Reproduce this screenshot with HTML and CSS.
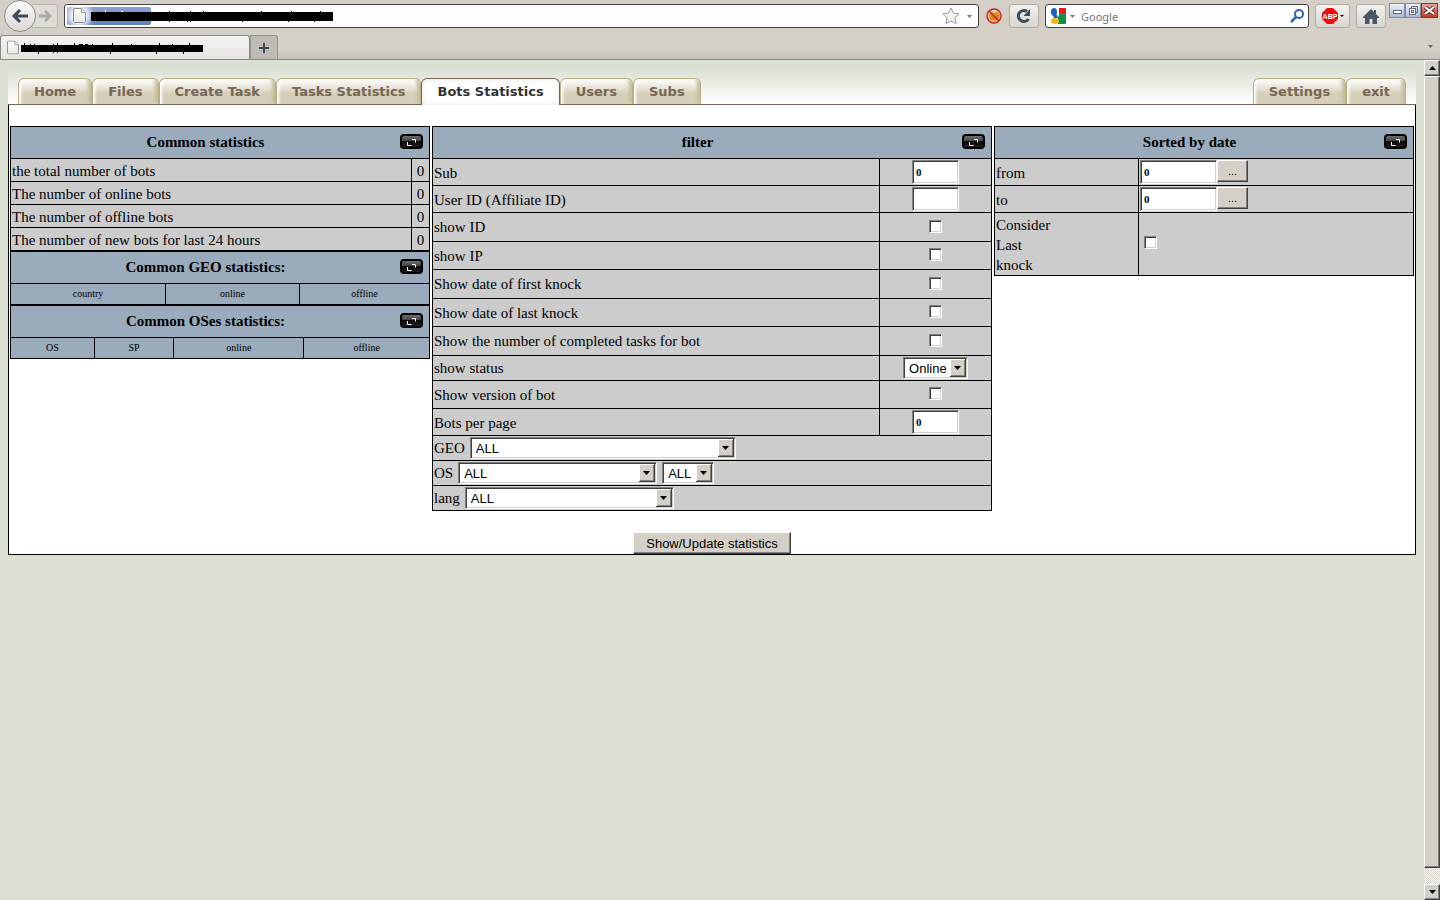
FILE: index.html
```html
<!DOCTYPE html>
<html lang="en">
  <head>
    <meta charset="utf-8">
    <title>Bots Statistics</title>
    <link rel="stylesheet" href="styles.css">
  </head>
  <body>
    <svg width="0" height="0" class="defs" aria-hidden="true">
      <defs>
        <linearGradient id="gloss" x1="0" y1="0" x2="0" y2="1">
          <stop offset="0" stop-color="#777" />
          <stop offset="0.45" stop-color="#444" />
          <stop offset="0.5" stop-color="#0a0a0a" />
          <stop offset="1" stop-color="#222" />
        </linearGradient>
        <linearGradient id="paper" x1="0" y1="0" x2="0" y2="1">
          <stop offset="0" stop-color="#fff" />
          <stop offset="1" stop-color="#e6e6e6" />
        </linearGradient>
        <symbol id="page-icon" viewBox="0 0 13 15">
          <path d="M1 .5h7.500l4 4v9l-1 1H1.500l-1-1V1z" fill="url(#paper)" stroke="#8a8a8a" />
          <path d="M8.500 .5v4h4" fill="#eee" stroke="#999" />
        </symbol>
        <symbol id="toggle-icon" viewBox="0 0 23 15">
          <rect x="1" y="1" width="21" height="13" rx="3" fill="url(#gloss)" stroke="#000" stroke-width="2" />
          <path d="M12 5.500h3.500v3M7.500 8v3.500h4" fill="none" stroke="#fff" />
        </symbol>
      </defs>
    </svg>

    <div class="browser">
      <div class="toolbar">
        <div class="history">
          <button class="back" aria-label="Back">
            <svg width="18" height="18" viewBox="0 0 18 18"><path d="M17 9H4M9 3L3 9l6 6" fill="none" stroke="#3f4b57" stroke-width="3" /></svg>
          </button>
          <button class="forward" aria-label="Forward">
            <svg width="14" height="14" viewBox="0 0 14 14"><path d="M1 7h10M7 2l5 5-5 5" fill="none" stroke="#a9a9a9" stroke-width="3" /></svg>
          </button>
        </div>
        <div class="address">
          <span class="identity"><svg width="13" height="15"><use href="#page-icon" /></svg></span>
          <svg class="address-mask" width="243" height="14" viewBox="0 0 243 14">
            <path d="M0 3h242v9H0z" />
            <path d="M78 2h1v11h-1zM96 3h1v10h-1zM99 2h1v11h-1zM112 2h1v3h-1zM151 4h1v9h-1zM170 2h1v3h-1zM197 4h1v9h-1zM200 2h1v3h-1zM223 4h1v9h-1zM229 2h1v3h-1z" />
            <path d="M14 1h1v2h-1zM30 2h2v1h-2z" fill="#fff" />
          </svg>
          <button class="star" aria-label="Bookmark">
            <svg width="18" height="18" viewBox="0 0 18 18"><path d="M9 1l2.500 5 5.500.8-4 4 1 5.700-5-2.500-5 2.500 1-5.700-4-4L6.500 6z" fill="#f1f1f1" stroke="#999" stroke-linejoin="round" /></svg>
          </button>
          <svg class="caret" width="5" height="3"><path d="M0 0h5L2.500 3z" fill="#777" /></svg>
        </div>
        <button class="plain" aria-label="Blocked add-on">
          <svg width="16" height="16" viewBox="0 0 16 16">
            <path d="M3 6l3-2 2 1 4-1 2 3-1 4-4 2-5-1z" fill="#e98a1c" />
            <path d="M5 8l2 1 3-2 2 2-2 2-4-1z" fill="#c87414" />
            <circle cx="8" cy="8" r="7" fill="none" stroke="#c8291d" stroke-width="1.500" />
            <path d="M3 3l10 10" stroke="#c8291d" stroke-width="1.500" />
          </svg>
        </button>
        <button class="tool" aria-label="Reload">
          <svg width="16" height="16" viewBox="0 0 16 16"><path d="M12.500 11A5.500 5.500 0 1 1 11 3.500" fill="none" stroke="#3f4b57" stroke-width="3" /><path d="M14 1v7H7.500z" fill="#3f4b57" /></svg>
        </button>
        <div class="search">
          <svg width="16" height="16" viewBox="0 0 16 16">
            <path d="M8 0h7a1 1 0 0 1 1 1v4H9z" fill="#e8161a" />
            <path d="M9 5h7v10a1 1 0 0 1-1 1H8V9z" fill="#109348" />
            <path d="M7 0h2v6L8 9v7H6z" fill="#fff" />
            <ellipse cx="4" cy="4" rx="3" ry="4" fill="#1b5fc4" />
            <path d="M3 7h4l1 3H4z" fill="#1b5fc4" />
            <ellipse cx="5" cy="13" rx="4" ry="3" fill="#f2b912" />
          </svg>
          <svg class="caret" width="5" height="3"><path d="M0 0h5L2.500 3z" fill="#777" /></svg>
          <input type="text" placeholder="Google" aria-label="Search">
          <svg width="14" height="14" viewBox="0 0 14 14"><circle cx="9" cy="5" r="4" fill="#fff" stroke="#2b63ad" stroke-width="2" /><path d="M6 8l-5 5" stroke="#2b63ad" stroke-width="2.500" /></svg>
        </div>
        <button class="tool wide" aria-label="Adblock">
          <svg width="22" height="16" viewBox="0 0 22 16">
            <path d="M5 0h6l5 5v6l-5 5H5l-5-5V5z" fill="#f00b0b" />
            <text x="8" y="11" text-anchor="middle" class="abp">ABP</text>
            <path d="M18 7h4l-2 2z" />
          </svg>
        </button>
        <button class="tool" aria-label="Home page">
          <svg width="16" height="15" viewBox="0 0 16 15"><path d="M8 0l3 3V1h2v4l3 3v1h-2v6H9.500v-5h-3v5H2V9H0V8z" fill="#4a5661" /></svg>
        </button>
        <div class="window-buttons">
          <button aria-label="Minimize"><svg width="9" height="9"><rect x=".5" y="4.500" width="8" height="3" fill="#fff" stroke="#667" /></svg></button>
          <button aria-label="Restore"><svg width="9" height="9"><path d="M2.500 2.500v-2h6v6h-2" fill="none" stroke="#667" /><rect x=".5" y="2.500" width="6" height="6" fill="#fff" stroke="#667" /><rect x="2.500" y="4.500" width="2" height="2" fill="none" stroke="#667" /></svg></button>
          <button class="close" aria-label="Close"><svg width="11" height="9"><path d="M1 1l9 7M10 1L1 8" stroke="#633" stroke-width="4" /><path d="M1 1l9 7M10 1L1 8" stroke="#fff" stroke-width="2" /></svg></button>
        </div>
      </div>

      <div class="tab-strip">
        <div class="browser-tab">
          <svg width="12" height="15" viewBox="0 0 13 15"><use href="#page-icon" /></svg>
          <svg width="182" height="12" viewBox="0 0 182 12">
            <path d="M0 3h182v7H0z" />
            <path d="M3 1h1v3H3zM9 2h1v2H9zM13 2h1v2h-1zM17 3h1v9h-1zM32 2h1v9h-1zM36 1h1v10h-1zM53 1h1v3h-1zM58 2h4v1h-4zM64 2h3v1h-3zM71 2h1v2h-1zM89 3h1v9h-1zM91 1h1v3h-1zM110 2h1v2h-1zM135 3h1v9h-1zM138 1h1v3h-1zM151 2h1v2h-1zM162 3h1v9h-1zM168 1h1v3h-1z" />
          </svg>
        </div>
        <button class="new-tab" aria-label="New tab">
          <svg width="10" height="10"><path d="M5 0v10M0 5h10" stroke="#3f4b57" stroke-width="2" /></svg>
        </button>
        <svg class="caret tab-list" width="5" height="3"><path d="M0 0h5L2.500 3z" fill="#666" /></svg>
      </div>

      <div class="viewport">
        <div class="page">
          <nav class="menu">
            <a href="#home">Home</a>
            <a href="#files">Files</a>
            <a href="#create">Create Task</a>
            <a href="#tasks">Tasks Statistics</a>
            <a href="#bots" class="active">Bots Statistics</a>
            <a href="#users">Users</a>
            <a href="#subs">Subs</a>
            <a href="#settings" class="right">Settings</a>
            <a href="#exit">exit</a>
          </nav>

          <form class="content">
            <div class="columns">
              <div>
                <table class="common">
                  <thead>
                    <tr>
                      <th colspan="2"><div class="title"><span>Common statistics</span><button type="button" aria-label="Toggle"><svg width="23" height="15"><use href="#toggle-icon" /></svg></button></div></th>
                    </tr>
                  </thead>
                  <tbody>
                    <tr><td>the total number of bots</td><td class="count">0</td></tr>
                    <tr><td>The number of online bots</td><td class="count">0</td></tr>
                    <tr><td>The number of offline bots</td><td class="count">0</td></tr>
                    <tr><td>The number of new bots for last 24 hours</td><td class="count">0</td></tr>
                  </tbody>
                </table>
                <table class="geo">
                  <colgroup><col class="country"><col class="online"><col></colgroup>
                  <tr>
                    <th colspan="3"><div class="title"><span>Common GEO statistics:</span><button type="button" aria-label="Toggle"><svg width="23" height="15"><use href="#toggle-icon" /></svg></button></div></th>
                  </tr>
                  <tr class="heads"><th>country</th><th>online</th><th>offline</th></tr>
                </table>
                <table class="oses">
                  <colgroup><col class="os"><col class="sp"><col class="online"><col></colgroup>
                  <tr>
                    <th colspan="4"><div class="title"><span>Common OSes statistics:</span><button type="button" aria-label="Toggle"><svg width="23" height="15"><use href="#toggle-icon" /></svg></button></div></th>
                  </tr>
                  <tr class="heads"><th>OS</th><th>SP</th><th>online</th><th>offline</th></tr>
                </table>
              </div>

              <table class="filter">
                <colgroup><col class="name"><col></colgroup>
                <thead>
                  <tr>
                    <th colspan="2"><div class="title"><span>filter</span><button type="button" aria-label="Toggle"><svg width="23" height="15"><use href="#toggle-icon" /></svg></button></div></th>
                  </tr>
                </thead>
                <tbody>
                  <tr class="field"><td><label for="sub">Sub</label></td><td><input type="text" id="sub" value="0"></td></tr>
                  <tr class="field"><td><label for="user">User ID (Affiliate ID)</label></td><td><input type="text" id="user"></td></tr>
                  <tr class="option tall"><td><label for="show-id">show ID</label></td><td><input type="checkbox" id="show-id"></td></tr>
                  <tr class="option"><td><label for="show-ip">show IP</label></td><td><input type="checkbox" id="show-ip"></td></tr>
                  <tr class="option tall"><td><label for="first">Show date of first knock</label></td><td><input type="checkbox" id="first"></td></tr>
                  <tr class="option"><td><label for="last">Show date of last knock</label></td><td><input type="checkbox" id="last"></td></tr>
                  <tr class="option tall"><td><label for="completed">Show the number of completed tasks for bot</label></td><td><input type="checkbox" id="completed"></td></tr>
                  <tr class="choice"><td><label for="status">show status</label></td><td><select id="status" class="status"><option>Online</option><option>Offline</option></select></td></tr>
                  <tr class="option"><td><label for="version">Show version of bot</label></td><td><input type="checkbox" id="version"></td></tr>
                  <tr class="field"><td><label for="per-page">Bots per page</label></td><td><input type="text" id="per-page" value="0"></td></tr>
                  <tr class="choice"><td colspan="2"><div class="line"><label for="geo">GEO</label><select id="geo" class="geo-list"><option>ALL</option></select></div></td></tr>
                  <tr class="choice"><td colspan="2"><div class="line"><label for="os">OS</label><select id="os" class="os-list"><option>ALL</option></select><select class="sp-list" aria-label="SP"><option>ALL</option></select></div></td></tr>
                  <tr class="choice"><td colspan="2"><div class="line"><label for="lang">lang</label><select id="lang" class="lang-list"><option>ALL</option></select></div></td></tr>
                </tbody>
              </table>

              <table class="dates">
                <colgroup><col class="name"><col></colgroup>
                <thead>
                  <tr>
                    <th colspan="2"><div class="title"><span>Sorted by date</span><button type="button" aria-label="Toggle"><svg width="23" height="15"><use href="#toggle-icon" /></svg></button></div></th>
                  </tr>
                </thead>
                <tbody>
                  <tr class="field"><td><label for="from">from</label></td><td><div class="date"><input type="text" id="from" value="0"><button type="button">...</button></div></td></tr>
                  <tr class="field"><td><label for="to">to</label></td><td><div class="date"><input type="text" id="to" value="0"><button type="button">...</button></div></td></tr>
                  <tr><td><label for="consider">Consider<br>Last<br>knock</label></td><td class="consider"><input type="checkbox" id="consider"></td></tr>
                </tbody>
              </table>
            </div>
            <button type="button" class="update">Show/Update statistics</button>
          </form>
        </div>

        <div class="scrollbar">
          <button aria-label="Scroll up"><svg width="7" height="4"><path d="M0 4h7L3.500 0z" /></svg></button>
          <div class="thumb"></div>
          <div class="track"></div>
          <button aria-label="Scroll down"><svg width="7" height="4"><path d="M0 0h7L3.500 4z" /></svg></button>
        </div>
      </div>
    </div>
  </body>
</html>
```
FILE: styles.css
```css
* {
  box-sizing: border-box;
}
body {
  margin: 0;
  font-family: "Liberation Serif", "Times New Roman", serif;
  font-size: 15px;
  line-height: 20px;
  color: #000;
}
button {
  padding: 0;
  border: 0;
  background: none;
  font-family: "Liberation Sans", Arial, sans-serif;
}
svg {
  display: block;
  flex: none;
}
.defs {
  position: absolute;
}
.browser {
  display: flex;
  flex-direction: column;
  height: 100vh;
  background: #d4d0c8;
}

/* browser toolbar */
.toolbar {
  display: flex;
  align-items: center;
  height: 32px;
  padding: 0 2px 0 4px;
}
.history {
  display: flex;
  align-items: center;
  margin-right: 6px;
}
.back {
  display: flex;
  align-items: center;
  justify-content: center;
  width: 32px;
  height: 32px;
  border: 1px solid #8c8984;
  border-radius: 50%;
  background: linear-gradient(#fafafa, #dcdad6);
  z-index: 1;
}
.forward {
  display: flex;
  align-items: center;
  justify-content: center;
  width: 26px;
  height: 24px;
  margin-left: -4px;
  border: 1px solid #bbb7b0;
  border-radius: 0 3px 3px 0;
  background: #dedbd5;
}
.address {
  display: flex;
  flex: 1;
  align-items: center;
  height: 24px;
  padding: 0 6px 0 2px;
  border: 1px solid #444;
  border-radius: 3px;
  background: #fff;
}
.identity {
  width: 84px;
  height: 18px;
  padding: 1px 6px;
  border-radius: 2px;
  background: radial-gradient(circle at 12px 9px, #fff 6px, transparent 16px), linear-gradient(#8ba3d2, #5f7fbd);
}
.address-mask {
  margin-left: -60px;
}
.star {
  margin-left: auto;
}
.address .caret {
  margin-left: 7px;
}
.plain {
  margin: 0 7px;
}
.tool {
  display: flex;
  align-items: center;
  justify-content: center;
  width: 30px;
  height: 24px;
  border: 1px solid #b0aca5;
  border-radius: 3px;
  background: linear-gradient(#f2f1ef, #d9d6d0);
}
.tool.wide {
  width: 35px;
  margin-right: 6px;
}
.abp {
  fill: #fff;
  font: bold 7px "Liberation Sans", Arial, sans-serif;
}
.search {
  display: flex;
  align-items: center;
  gap: 4px;
  width: 264px;
  height: 24px;
  margin: 0 6px;
  padding: 0 4px;
  border: 1px solid #444;
  border-radius: 3px;
  background: #fff;
}
.search input {
  flex: 1;
  min-width: 0;
  border: 0;
  outline: 0;
  font: 11px "Noto Sans", Tahoma, sans-serif;
}
.search input::placeholder {
  color: #777;
}
.window-buttons {
  display: flex;
  align-self: flex-start;
  margin: 3px 0 0 3px;
}
.window-buttons button {
  display: flex;
  align-items: center;
  justify-content: center;
  width: 16px;
  height: 15px;
  border: 1px solid #7e8ba3;
  background: linear-gradient(#eef2fa, #a9bad6);
}
.window-buttons .close {
  width: 17px;
  border-color: #7a3b33;
  background: linear-gradient(#e8a598, #c23a24);
}

/* browser tabs */
.tab-strip {
  display: flex;
  align-items: flex-end;
  height: 28px;
  border-bottom: 1px solid #8c8984;
  background: linear-gradient(#d4d0c8 60%, #c8c4bd);
}
.browser-tab {
  display: flex;
  align-items: center;
  gap: 2px;
  width: 250px;
  height: 24px;
  padding: 0 6px;
  border: 1px solid #8c8984;
  border-bottom: 0;
  border-radius: 3px 3px 0 0;
  background: linear-gradient(#f4f3f2, #e6e4e1);
}
.new-tab {
  display: flex;
  align-items: center;
  justify-content: center;
  width: 28px;
  height: 24px;
  border: 1px solid #96928c;
  border-bottom: 0;
  border-radius: 0 3px 0 0;
  background: #c0bcb5;
}
.tab-list {
  margin: 0 7px 11px auto;
}

/* page */
.viewport {
  display: flex;
  flex: 1;
  min-height: 0;
}
.page {
  flex: 1;
  padding: 8px;
  background: #dae0d2;
}
.menu {
  display: flex;
  align-items: flex-end;
  height: 37px;
  padding: 0 10px;
  border-bottom: 1px solid #776655;
  background: linear-gradient(#dae0d2, #fff);
}
.menu a {
  height: 26px;
  padding: 0 15px;
  border: 1px solid #b8ae86;
  border-width: 1px 1px 0 1px;
  border-radius: 6px 6px 0 0;
  background: linear-gradient(#fff, #d5cfb9 60%);
  box-shadow: inset 2px 1px 3px #fff, inset -3px 0 3px #c6bd9c;
  color: #776655;
  font: bold 13px/26px "DejaVu Sans", Verdana, sans-serif;
  text-decoration: none;
}
.menu .active {
  height: 27px;
  margin-bottom: -1px;
  border-color: #776655;
  background: #fff;
  box-shadow: inset 0 0 6px #e8e6e0;
  color: #333;
}
.menu .right {
  margin-left: auto;
}
.content {
  display: flex;
  flex-direction: column;
  align-items: center;
  padding: 21px 1px 0;
  border: 1px solid #000;
  border-top: 0;
  background: #fff;
}
.columns {
  display: grid;
  grid-template-columns: 3fr 4fr 3fr;
  align-items: start;
  gap: 2px;
  width: 100%;
}
table {
  width: 100%;
  border-collapse: collapse;
  table-layout: fixed;
  background: #ccc;
}
th,
td {
  height: 23px;
  padding: 2px 1px 0;
  border: 1px solid #000;
}
th {
  height: 32px;
  padding: 0 0 2px;
  background: #9aabbb;
}
.title {
  display: flex;
  align-items: center;
  padding-right: 6px;
  font-size: 15px;
}
.title span {
  flex: 1;
}
.heads th {
  height: 21px;
  padding: 0;
  font-size: 10px;
  font-weight: normal;
}
.common {
  table-layout: auto;
}
.common .count {
  width: 18px;
  text-align: center;
}
.geo .country {
  width: 37%;
}
.geo .online {
  width: 32%;
}
.oses .os {
  width: 20%;
}
.oses .sp {
  width: 19%;
}
.oses .online {
  width: 31%;
}
.filter .name {
  width: 80%;
}
.dates .name {
  width: 144px;
}
.filter td + td {
  text-align: center;
}
.field td {
  height: 27px;
  padding: 0 1px;
}
.field label {
  display: block;
  padding-top: 2px;
}
.option td {
  height: 28px;
  padding: 0 1px;
}
.option.tall td {
  height: 29px;
}
.option td + td {
  padding-bottom: 2px;
}
.choice td {
  height: 25px;
  padding: 0 1px;
}

/* form controls */
input[type="text"],
select {
  border-radius: 0;
}
td input[type="text"] {
  display: block;
  width: 47px;
  height: 24px;
  margin: 0 auto;
  padding: 0 3px;
  border: 1px solid;
  border-color: #808080 #fff #fff #808080;
  box-shadow: inset 1px 1px #404040, inset -1px -1px #d4d0c8;
  background: #fff;
  font: bold 11px "Liberation Serif", "Times New Roman", serif;
}
.date {
  display: flex;
}
.date input[type="text"] {
  width: 77px;
  margin: 0;
}
.date button,
.update,
.scrollbar button,
.thumb {
  border: 1px solid;
  border-color: #fff #404040 #404040 #fff;
  box-shadow: inset -1px -1px #808080;
  background: #d4d0c8;
}
.date button {
  width: 31px;
  height: 22px;
  font-size: 11px;
}
input[type="checkbox"] {
  appearance: none;
  display: block;
  width: 13px;
  height: 13px;
  margin: 0 auto;
  border: 1px solid;
  border-color: #808080 #fff #fff #808080;
  box-shadow: inset 1px 1px #404040, inset -1px -1px #d4d0c8;
  background: #fff;
}
td.consider {
  padding: 0 5px 3px;
}
.consider input[type="checkbox"] {
  margin: 0;
}
.line {
  display: flex;
  align-items: center;
  gap: 5px;
}
select {
  appearance: none;
  height: 22px;
  padding: 0 20px 0 5px;
  border: 1px solid;
  border-color: #808080 #fff #fff #808080;
  box-shadow: inset 1px 1px #404040, inset -1px -1px #d4d0c8;
  background: #fff url("data:image/svg+xml,%3Csvg xmlns='http://www.w3.org/2000/svg' width='16' height='18'%3E%3Cpath d='M0 0h16v18H0z' fill='%23404040'/%3E%3Cpath d='M0 0h15v17H0z' fill='%23fff'/%3E%3Cpath d='M1 1h14v16H1z' fill='%23808080'/%3E%3Cpath d='M1 1h13v15H1z' fill='%23d4d0c8'/%3E%3Cpath d='M4 7h7L7.5 11z'/%3E%3C/svg%3E") right 1px center no-repeat;
  color: #000;
  font: 13px "Liberation Sans", Arial, sans-serif;
}
.status {
  display: block;
  width: 65px;
  margin: 0 auto;
}
.geo-list {
  width: 266px;
}
.os-list {
  width: 199px;
}
.sp-list {
  width: 52px;
}
.lang-list {
  width: 209px;
}
.update {
  height: 22px;
  margin-top: 21px;
  padding: 0 12px;
  font-size: 13px;
}

/* scrollbar */
.scrollbar {
  display: flex;
  flex-direction: column;
  width: 16px;
  background: #ebe9e4;
}
.scrollbar button {
  display: flex;
  align-items: center;
  justify-content: center;
  height: 16px;
}
.thumb {
  flex: 1;
}
.track {
  height: 16px;
  background: repeating-conic-gradient(#fff 0 25%, #d4d0c8 0 50%) 0 0 / 2px 2px;
}
```
